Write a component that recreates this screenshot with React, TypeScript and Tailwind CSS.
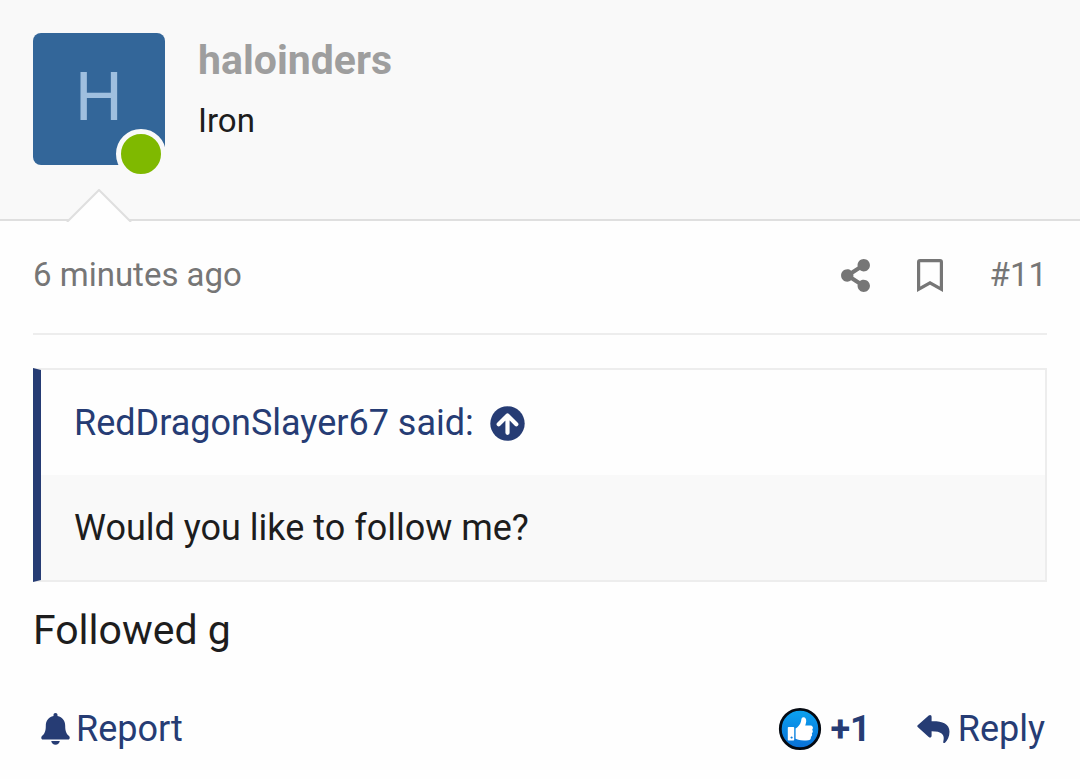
import { FaShareAlt } from "react-icons/fa";

function BookmarkIcon() {
  return (
    <svg viewBox="0 0 26 33" className="h-[33px] w-[26px]" fill="currentColor" aria-hidden="true">
      <path
        fillRule="evenodd"
        d="M3 0h20q3 0 3 3v30l-13-7.300L0 33V3q0-3 3-3zM3.200 3.200v24.400l9.800-5.500 9.800 5.500V3.200z"
      />
    </svg>
  );
}

function ArrowUpIcon() {
  return (
    <svg viewBox="0 0 35 35" className="size-[35px]" aria-hidden="true">
      <circle cx="17.500" cy="17.500" r="17.200" fill="currentColor" />
      <path
        d="M8.700 18.200 17.500 9.400l8.800 8.800M17.500 10.500v16.300"
        fill="none"
        stroke="#fefefe"
        strokeWidth="4.200"
        strokeLinecap="round"
        strokeLinejoin="round"
      />
    </svg>
  );
}

function BellIcon() {
  return (
    <svg viewBox="0 0 29 32" className="h-8 w-[29px]" fill="currentColor" aria-hidden="true">
      <path d="M14.500 0c1.300 0 2 .9 2 2v1.100c4.900 1 7.700 4.900 7.700 9.600 0 5 .9 7.900 3.800 10.300 1.300 1.200.8 3.500-1 3.500H2c-1.800 0-2.300-2.300-1-3.500 2.900-2.400 3.800-5.300 3.800-10.300 0-4.700 2.800-8.600 7.700-9.600V2c0-1.100.7-2 2-2z" />
      <path d="M10.200 28h8.600c-.4 2.200-2.100 3.700-4.300 3.700s-3.900-1.500-4.300-3.700z" />
    </svg>
  );
}

function ReplyIcon() {
  return (
    <svg viewBox="0 0 33 30" className="h-[30px] w-[33px]" fill="currentColor" aria-hidden="true">
      <path d="M.7 11.200 11.700 1.600c1.400-1.200 2.900-.4 2.900 1.300v4.300C25 7 32.500 9.200 32.500 17.800c0 5-2.100 8.600-4.500 10.900-.9.800-2.200.2-1.700-1.200C28.200 20.500 24.600 17.300 14.600 17.300v4.400c0 1.700-1.500 2.400-2.900 1.200L.7 12.900c-.6-.5-.6-1.200 0-1.700z" />
    </svg>
  );
}

function LikeIcon() {
  return (
    <svg viewBox="0 0 44 44" className="size-11" aria-hidden="true">
      <defs>
        <linearGradient id="like" x1="0" y1="0" x2="0" y2="1">
          <stop offset="0" stopColor="#0ba3f0" />
          <stop offset="1" stopColor="#0a6fd6" />
        </linearGradient>
      </defs>
      <circle cx="22" cy="22" r="19.7" fill="url(#like)" stroke="#050a12" strokeWidth="2.8" />
      <path
        fill="#fff"
        fillRule="evenodd"
        d="M10.600 20h4.800q.8 0 .8.8v12q0 .8-.8.8h-4.800q-.8 0-.8-.8v-12q0-.8.8-.8zM13.600 29.400a1.100 1.100 0 1 0 .01 0z"
      />
      <path
        fill="#fff"
        d="M17.600 21.600c2.600-1.600 4.600-4 5.400-7 .4-1.600.2-4.200 2.200-4.400 2.200-.2 3.200 1.800 3 4.200-.1 1.600-.7 2.900-1 4.200h5.200c2.400 0 3.400 2.600 1.800 4.200 1 1.200.8 2.800-.4 3.600.7 1.200.3 2.700-.9 3.300.4 1.900-.7 3.300-2.700 3.500-3.500.3-7.200.3-9.900-.4-1.100-.3-1.900-.8-2.700-1z"
      />
    </svg>
  );
}

function PostHeader() {
  return (
    <header className="relative flex gap-[33px] border-b-2 border-[#dfdfdf] bg-[#f9f9f9] px-[33px] pt-[33px] pb-[54px]">
      <div className="relative">
        <a
          href="#"
          aria-label="haloinders"
          className="flex size-[132px] items-center justify-center rounded-lg bg-[#336699] pb-1 text-[67px] leading-none text-[#9fbfdf]"
        >
          H
        </a>
        <span className="absolute -right-px -bottom-[14px] size-[50px] rounded-full border-5 border-[#f9f9f9] bg-[#7fb900]" />
      </div>
      <div>
        <h4 className="text-[41px] leading-[54px] font-bold text-[#9e9e9e]">
          <a href="#">haloinders</a>
        </h4>
        <h5 className="mt-3 text-[33px] leading-[44px]">Iron</h5>
      </div>
      <svg viewBox="0 0 66 33" className="absolute -bottom-[3px] left-[66px] h-[33px] w-[66px]" aria-hidden="true">
        <path d="M2 32 33 1 64 32V33H2z" fill="#fefefe" />
        <path d="M1 33 33 1 65 33" fill="none" stroke="#dfdfdf" strokeWidth="2" />
      </svg>
    </header>
  );
}

export default function App() {
  return (
    <article className="min-h-screen bg-[#fefefe] font-[Roboto,sans-serif] text-[#1d1d1d]">
      <PostHeader />
      <div className="px-[33px]">
        <div className="flex items-center justify-between border-b-2 border-[#ededed] pt-[30px] pb-[34px] text-[33px] leading-[48px] text-[#767676]">
          <time>6 minutes ago</time>
          <div className="flex items-center gap-[47px]">
            <a href="#" aria-label="Share">
              <FaShareAlt className="h-[33px] w-[29px]" />
            </a>
            <a href="#" aria-label="Bookmark">
              <BookmarkIcon />
            </a>
            <a href="#">#11</a>
          </div>
        </div>

        <blockquote className="mt-[33px] border-2 border-l-8 border-[#ededed] border-l-[#263c74] text-[36px] leading-[47px]">
          <a href="#" className="flex items-center gap-4 px-[33px] pt-[30px] pb-7 text-[#263c74]">
            RedDragonSlayer67 said:
            <ArrowUpIcon />
          </a>
          <p className="bg-[#f9f9f9] px-[33px] pt-[30px] pb-7">Would you like to follow me?</p>
        </blockquote>

        <p className="mt-5 text-[41px] leading-[56px]">Followed g</p>

        <footer className="mt-12 flex items-center justify-between pr-[2px] text-[36px] leading-[46px] text-[#263c74]">
          <button className="flex items-center gap-[6px] pl-2">
            <BellIcon />
            Report
          </button>
          <div className="flex items-center gap-[46px]">
            <button className="flex items-center gap-2 font-bold">
              <LikeIcon />
              +1
            </button>
            <button className="flex items-center gap-2">
              <ReplyIcon />
              Reply
            </button>
          </div>
        </footer>
      </div>
    </article>
  );
}
